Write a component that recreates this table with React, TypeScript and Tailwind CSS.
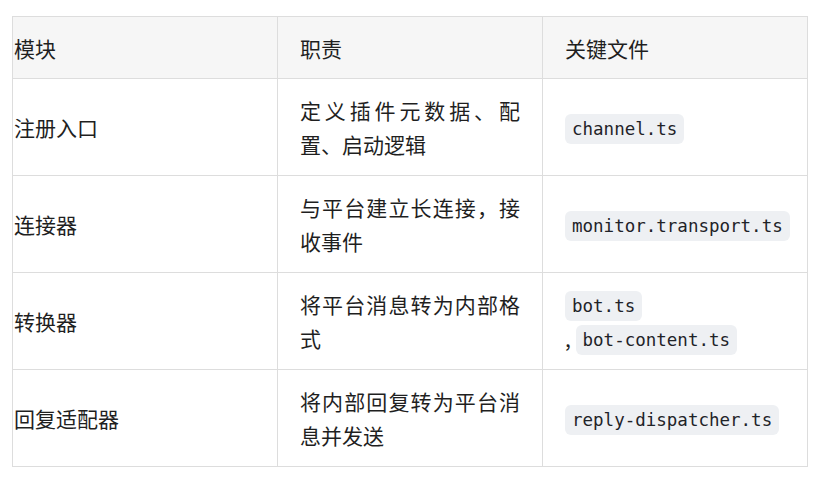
import React from "react";

const Code = ({ children }: { children: React.ReactNode }) => (
  <code
    className="inline-block rounded-[6px] bg-[#eef0f3] px-[7px] py-[4.5px] text-[17.5px] leading-[21px] text-[#1f2328]"
    style={{ fontFamily: '"DejaVu Sans Mono", "Liberation Mono", monospace' }}
  >
    {children}
  </code>
);

const Line = ({ children }: { children: React.ReactNode }) => (
  <div className="flex h-[34px] items-end whitespace-pre">{children}</div>
);

const rows: { name: string; duty: string; files: React.ReactNode }[] = [
  {
    name: "注册入口",
    duty: "定义插件元数据、配置、启动逻辑",
    files: (
      <Line>
        <Code>channel.ts</Code>
      </Line>
    ),
  },
  {
    name: "连接器",
    duty: "与平台建立长连接，接收事件",
    files: (
      <Line>
        <Code>monitor.transport.ts</Code>
      </Line>
    ),
  },
  {
    name: "转换器",
    duty: "将平台消息转为内部格式",
    files: (
      <>
        <Line>
          <Code>bot.ts</Code>
        </Line>
        <Line>
          <span className="self-center">{", "}</span>
          <Code>bot-content.ts</Code>
        </Line>
      </>
    ),
  },
  {
    name: "回复适配器",
    duty: "将内部回复转为平台消息并发送",
    files: (
      <Line>
        <Code>reply-dispatcher.ts</Code>
      </Line>
    ),
  },
];

export default function App() {
  return (
    <div
      className="w-[815px] h-[478px] bg-white pt-[16px] pl-[12px] text-[#1f1f1f]"
      style={{ fontFamily: '"Noto Sans CJK SC", "Noto Sans", sans-serif' }}
    >
      <table className="w-[795px] table-fixed border-collapse text-[21px] leading-[34px]">
        <colgroup>
          <col className="w-[265px]" />
          <col className="w-[265px]" />
          <col className="w-[265px]" />
        </colgroup>
        <thead>
          <tr className="bg-[#f6f6f6]">
            <th className="border border-[#dddddd] py-[13.5px] pl-[1px] pr-[22px] text-left font-normal">模块</th>
            <th className="border border-[#dddddd] py-[13.5px] px-[22px] text-left font-normal">职责</th>
            <th className="border border-[#dddddd] py-[13.5px] px-[22px] text-left font-normal">关键文件</th>
          </tr>
        </thead>
        <tbody>
          {rows.map((r) => (
            <tr key={r.name}>
              <td className="border border-[#dddddd] py-[14px] pl-[1px] pr-[22px] align-middle">{r.name}</td>
              <td className="border border-[#dddddd] py-[14px] px-[22px] align-middle text-justify">{r.duty}</td>
              <td className="border border-[#dddddd] py-[14px] px-[22px] align-middle">{r.files}</td>
            </tr>
          ))}
        </tbody>
      </table>
    </div>
  );
}
